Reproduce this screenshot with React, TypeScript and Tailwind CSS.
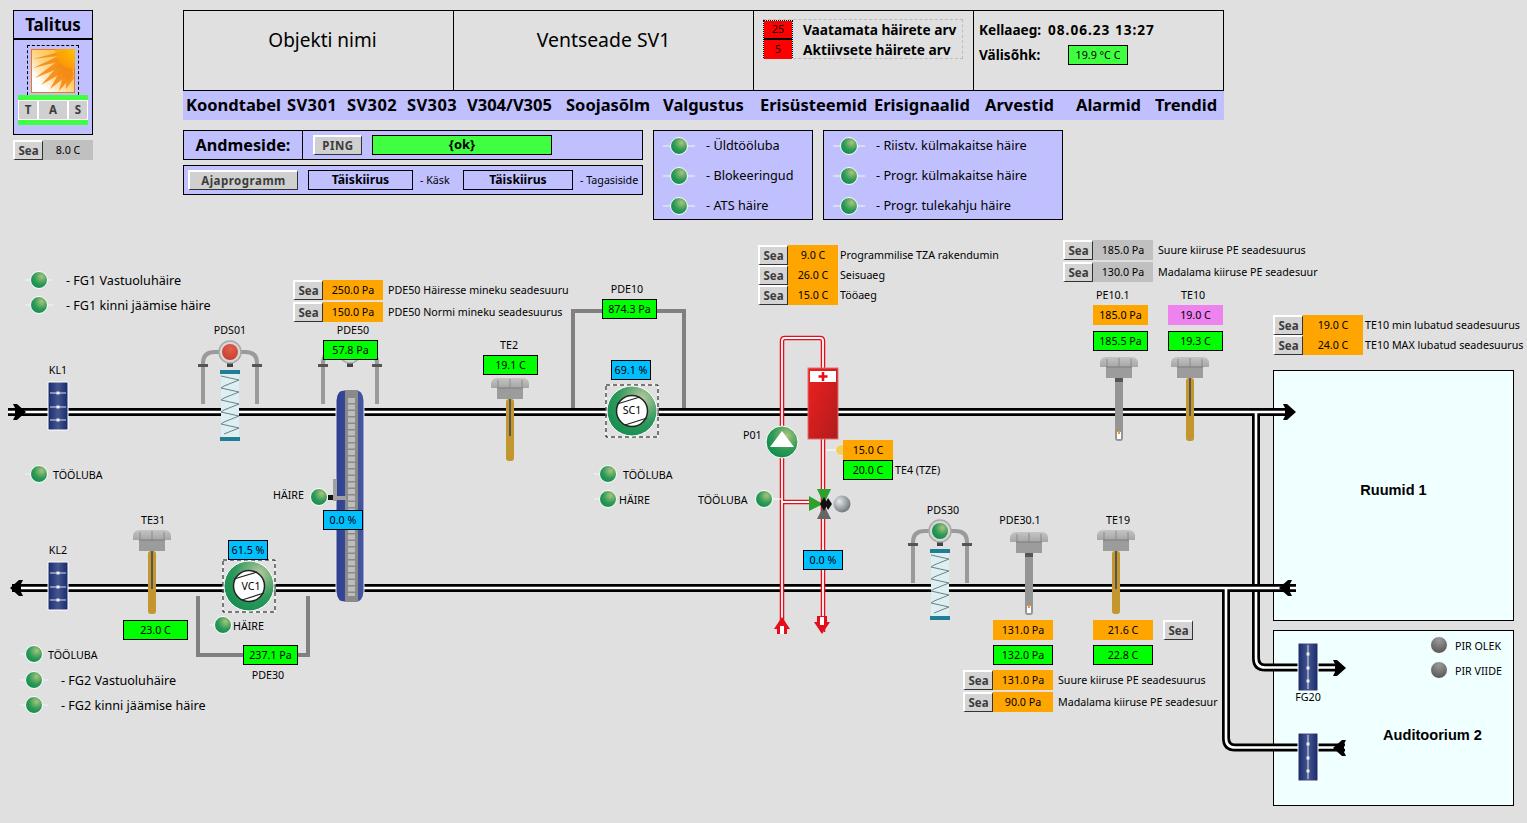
import type { ReactNode } from "react"

const font = "[font-family:'Noto_Sans',Tahoma,sans-serif]"

const navItems = [
  ["Koondtabel", "w-[101px]"],
  ["SV301", "w-[60px] tracking-[0.4px]"],
  ["SV302", "w-[60px] tracking-[0.4px]"],
  ["SV303", "w-[60px] tracking-[0.4px]"],
  ["V304/V305", "w-[99px]"],
  ["Soojasõlm", "w-[97px]"],
  ["Valgustus", "w-[97px]"],
  ["Erisüsteemid", "w-[114px]"],
  ["Erisignaalid", "w-[111px]"],
  ["Arvestid", "w-[91px]"],
  ["Alarmid", "w-[79px]"],
  ["Trendid", "w-[66px]"],
]

const tones: Record<string, string> = {
  orange: "bg-[#ffa500]",
  green: "bg-[#00ff00] border border-black",
  blue: "bg-[#00bfff] border border-black",
  gray: "bg-[#c0c0c0]",
  pink: "bg-[#ee82ee]",
}

function Val({ tone, className = "", children }: { tone: string; className?: string; children: ReactNode }) {
  return (
    <div className={`flex h-5 items-center justify-center text-[10.7px] whitespace-nowrap text-black ${tones[tone]} ${className}`}>
      {children}
    </div>
  )
}

function Sea({ className = "" }: { className?: string }) {
  return (
    <div className={`flex h-5 w-[30px] items-center justify-center border-t-2 border-l-2 border-t-white border-l-white border-r border-b border-r-[#333] border-b-[#333] bg-[#d4d4d4] text-[11.5px] font-bold text-[#3c3c3c] ${className}`}>
      Sea
    </div>
  )
}

function SeaRow({ tone, value, label, w = "w-[60px]", gap = "ml-[5px]" }: { tone: string; value: string; label: string; w?: string; gap?: string }) {
  return (
    <div className="flex h-5 items-center">
      <Sea />
      <Val tone={tone} className={w}>{value}</Val>
      <span className={`text-[10.7px] whitespace-nowrap ${gap}`}>{label}</span>
    </div>
  )
}

function Cap({ className = "", children }: { className?: string; children: ReactNode }) {
  return <div className={`flex h-5 items-center text-[10.7px] whitespace-nowrap ${className}`}>{children}</div>
}

function Lab({ className = "", children }: { className?: string; children: ReactNode }) {
  return <Cap className={`absolute ${className}`}>{children}</Cap>
}

function Led({ x, y, tone = "g", left = 14, right = 14 }: { x: number; y: number; tone?: "g" | "k"; left?: number; right?: number }) {
  return (
    <g>
      <line x1={x - left - 2} y1={y} x2={x + right + 2} y2={y} stroke={tone === "k" ? "#f0ffff" : "#f4f4f4"} strokeWidth="1" />
      <circle cx={x} cy={y} r="8.5" fill={tone === "g" ? "url(#ledGreen)" : "url(#ledGray)"} stroke="#fff" strokeWidth="1" />
    </g>
  )
}

function LedRow({ children }: { children: ReactNode }) {
  return (
    <div className="flex h-[30px] items-center text-[12.7px]">
      <svg width="40" height="24" viewBox="0 0 40 24" className="mr-[9px] ml-[3px] shrink-0">
        <Led x={22} y={12} />
      </svg>
      <span>{children}</span>
    </div>
  )
}

// led with its caption, used for the loose lists on the diagram
function Ind({ tone = "g", right = 12, className = "text-[10.7px]", children }: { tone?: "g" | "k"; right?: number; className?: string; children: ReactNode }) {
  return (
    <div className="flex h-6 items-center whitespace-nowrap">
      <svg width="28" height="24" viewBox="0 0 28 24" className="shrink-0">
        <Led x={14} y={12} tone={tone} left={12} right={right} />
      </svg>
      <span className={`pt-[2px] ${className}`}>{children}</span>
    </div>
  )
}

function Damper({ x, y, vertical }: { x: number; y: number; vertical?: boolean }) {
  const rows = [y + 11, y + 25, y + 38]
  return (
    <g>
      <rect x={x} y={y} width="20" height="48" rx="1" fill="url(#damper)" stroke="#fff" strokeWidth="1" />
      {vertical ? (
        <line x1={x + 10} y1={y + 2} x2={x + 10} y2={y + 46} stroke="#d8e0f0" strokeWidth="1" />
      ) : (
        rows.map((r) => <line key={r} x1={x + 2} y1={r} x2={x + 18} y2={r} stroke="#d8e0f0" strokeWidth="1" />)
      )}
      {rows.map((r) => (
        <rect key={r} x={x + 8.5} y={r - 1.5} width="3" height="3" fill="#fff" opacity="0.85" />
      ))}
    </g>
  )
}

function Coil({ cx, y }: { cx: number; y: number }) {
  const pts: string[] = []
  for (let i = 0; i < 5; i++) {
    pts.push(`${cx - 9},${y + 6 + i * 12} ${cx + 9},${y + 10 + i * 12} ${cx - 6},${y + 16 + i * 12}`)
  }
  return (
    <g>
      <rect x={cx - 9} y={y} width="18" height="71" fill="#dcf0f2" />
      <polyline points={pts.join(" ")} fill="none" stroke="#6f7f86" strokeWidth="1" />
      <rect x={cx - 10} y={y} width="20" height="4" fill="#1f7d96" />
      <rect x={cx - 10} y={y + 67} width="20" height="4" fill="#1f7d96" />
    </g>
  )
}

function Pds({ cx, cy, fill, coil = true }: { cx: number; cy: number; fill: string; coil?: boolean }) {
  return (
    <g>
      <path d={`M${cx - 27} ${cy + 52} V${cy + 11} Q${cx - 27} ${cy} ${cx - 15} ${cy} H${cx - 8}`} fill="none" stroke="#9a9a9a" strokeWidth="4" />
      <path d={`M${cx + 27} ${cy + 52} V${cy + 11} Q${cx + 27} ${cy} ${cx + 15} ${cy} H${cx + 8}`} fill="none" stroke="#9a9a9a" strokeWidth="4" />
      <rect x={cx - 32} y={cy + 12} width="10" height="3" fill="#555" />
      <rect x={cx + 22} y={cy + 12} width="10" height="3" fill="#555" />
      <rect x={cx - 3} y={cy + 11} width="6" height="4" fill="#444" />
      <circle cx={cx} cy={cy} r="11" fill="#d8d8d8" stroke="#a8a8a8" strokeWidth="1.5" />
      <circle cx={cx} cy={cy} r="8" fill={fill} />
      {coil && <Coil cx={cx} y={cy + 18} />}
    </g>
  )
}

function Sensor({ cx, top, bottom, pressure }: { cx: number; top: number; bottom: number; pressure?: boolean }) {
  return (
    <g>
      <rect x={cx - 4} y={top + 22} width="8" height={bottom - top - 22} rx="3" fill={pressure ? "#959595" : "#c4962e"} />
      {pressure ? (
        <>
          <rect x={cx - 4} y={top + 22} width="8" height="4" fill="#555" />
          <rect x={cx - 2} y={bottom - 9} width="4" height="7" fill="#fff" />
          <rect x={cx - 1} y={bottom - 10} width="2" height="3" fill="#f59a23" />
        </>
      ) : (
        <rect x={cx - 1} y={top + 22} width="2" height={bottom - top - 47} fill="#555" />
      )}
      <rect x={cx - 13} y={top + 11} width="26" height="11" fill="#9c9c9c" />
      <path d={`M${cx - 19} ${top + 11} V${top + 6} Q${cx - 18} ${top + 1} ${cx - 12} ${top + 1} H${cx + 12} Q${cx + 18} ${top + 1} ${cx + 19} ${top + 6} V${top + 11} Z`} fill="url(#knob)" />
      <path d={`M${cx - 12} ${top + 3} V${top + 11} M${cx} ${top + 2} V${top + 11} M${cx + 12} ${top + 3} V${top + 11}`} stroke="#8a8a8a" strokeWidth="1" />
      <path d={`M${cx - 13} ${top + 11} H${cx + 13}`} stroke="#7c7c7c" strokeWidth="1" />
    </g>
  )
}

function Fan({ cx, cy }: { cx: number; cy: number }) {
  return (
    <g>
      <rect x={cx - 26} y={cy - 26} width="52" height="52" fill="none" stroke="#fff" strokeWidth="1" />
      <rect x={cx - 26} y={cy - 26} width="52" height="52" fill="none" stroke="#000" strokeWidth="1" strokeDasharray="4 3" />
      <circle cx={cx} cy={cy} r="25" fill="url(#fan)" stroke="#fff" strokeWidth="1" />
      <circle cx={cx} cy={cy} r="15.5" fill="#fff" stroke="#222" strokeWidth="1.5" />
      <line x1={cx - 15} y1={cy - 7} x2={cx + 8} y2={cy - 14} stroke="#222" strokeWidth="1.2" />
      <line x1={cx - 7} y1={cy + 14} x2={cx + 15} y2={cy + 7} stroke="#222" strokeWidth="1.2" />
    </g>
  )
}

function Arrow({ tip, y, dir }: { tip: number; y: number; dir: 1 | -1 }) {
  const p = (dx: number, dy: number) => `${tip - dir * dx},${y + dy}`
  return <polygon points={[p(0, 0), p(9, -8), p(13, -8), p(11, -4), p(11, 4), p(13, 8), p(9, 8)].join(" ")} fill="#000" />
}

function Pipes({ d, stroke, width }: { d: string; stroke: string; width: number }) {
  return <path d={d} fill="none" stroke={stroke} strokeWidth={width} strokeLinejoin="round" />
}

function SunIcon() {
  const rays = [
    [2, 10, 5], [2, 19, 5], [4, 29, 5], [10, 36, 5], [19, 40, 5], [28, 42, 5], [35, 40, 5],
  ]
  return (
    <svg width="44" height="44" viewBox="0 0 44 44">
      <rect x="0.5" y="0.5" width="43" height="43" fill="#fff" stroke="#f07a10" strokeWidth="1.5" />
      <rect x="1" y="1" width="42" height="42" fill="url(#sunBg)" />
      {rays.map(([x, y, w], i) => (
        <polygon key={i} points={`${x},${y} 43,${i * 4 + w} 36,${i * 2 + 1}`} fill="#f58a14" opacity="0.9" />
      ))}
      <circle cx="43" cy="1" r="19" fill="url(#sunCore)" />
    </svg>
  )
}

function Defs() {
  return (
    <svg width="0" height="0" className="absolute">
      <defs>
        <radialGradient id="ledGreen" cx="0.65" cy="0.3" r="0.8">
          <stop offset="0" stopColor="#a8c47c" />
          <stop offset="0.55" stopColor="#2f9a58" />
          <stop offset="1" stopColor="#078a4a" />
        </radialGradient>
        <radialGradient id="ledGray" cx="0.5" cy="0.2" r="0.8">
          <stop offset="0" stopColor="#9a9a9a" />
          <stop offset="1" stopColor="#555" />
        </radialGradient>
        <radialGradient id="ledRed" cx="0.55" cy="0.3" r="0.8">
          <stop offset="0" stopColor="#e0604c" />
          <stop offset="1" stopColor="#c8382c" />
        </radialGradient>
        <radialGradient id="ball" cx="0.35" cy="0.35" r="0.8">
          <stop offset="0" stopColor="#e4e8ea" />
          <stop offset="1" stopColor="#5e6468" />
        </radialGradient>
        <radialGradient id="fan" cx="0.7" cy="0.25" r="0.95">
          <stop offset="0" stopColor="#b8c8a0" />
          <stop offset="0.5" stopColor="#2f9a5c" />
          <stop offset="1" stopColor="#0c8a4c" />
        </radialGradient>
        <linearGradient id="damper" x1="0" x2="1" y1="0" y2="0">
          <stop offset="0" stopColor="#16296a" />
          <stop offset="0.5" stopColor="#47568f" />
          <stop offset="1" stopColor="#16296a" />
        </linearGradient>
        <linearGradient id="knob" x1="0" x2="0" y1="0" y2="1">
          <stop offset="0" stopColor="#c4c4c4" />
          <stop offset="1" stopColor="#a6a6a6" />
        </linearGradient>
        <linearGradient id="heater" x1="0" x2="1" y1="0" y2="1">
          <stop offset="0" stopColor="#f02020" />
          <stop offset="1" stopColor="#b01c1c" />
        </linearGradient>
        <linearGradient id="wheel" x1="0" x2="1" y1="0" y2="0">
          <stop offset="0" stopColor="#2f4090" />
          <stop offset="1" stopColor="#46569f" />
        </linearGradient>
        <linearGradient id="sunBg" x1="1" x2="0" y1="0" y2="1">
          <stop offset="0" stopColor="#ffb000" />
          <stop offset="0.55" stopColor="#ffd890" />
          <stop offset="0.8" stopColor="#fff" />
        </linearGradient>
        <radialGradient id="sunCore">
          <stop offset="0" stopColor="#ffc000" />
          <stop offset="1" stopColor="#ffa000" stopOpacity="0.7" />
        </radialGradient>
      </defs>
    </svg>
  )
}

function Header() {
  return (
    <div className="flex h-[230px] pt-[10px] pl-[13px]">
      <div className="w-20">
        <div className="h-[125px] border border-black bg-[#c0c0ff]">
          <div className="flex h-[29px] items-center justify-center border-b-2 border-black text-[17px] font-bold">Talitus</div>
          <div className="flex flex-col items-center pt-[5px]">
            <div className="flex h-[50px] w-[52px] items-center justify-center border border-b-0 border-dashed border-black">
              <SunIcon />
            </div>
            <div className="h-[5px] w-[70px] bg-[#40ff40]" />
            <div className="flex h-5 w-[70px] items-center justify-between bg-white px-px">
              <div className="flex h-[18px] w-[18px] items-center justify-center bg-[#d0d0d0] text-[11.5px] font-bold text-[#3c3c3c]">T</div>
              <div className="flex h-[18px] w-[28px] items-center justify-center bg-[#d0d0d0] text-[11.5px] font-bold text-[#3c3c3c]">A</div>
              <div className="flex h-[18px] w-[18px] items-center justify-center bg-[#d0d0d0] text-[11.5px] font-bold text-[#3c3c3c]">S</div>
            </div>
            <div className="h-[5px] w-[70px] bg-[#40ff40]" />
          </div>
        </div>
        <div className="mt-[5px] flex">
          <Sea />
          <Val tone="gray" className="w-[50px]">8.0 C</Val>
        </div>
      </div>

      <div className="ml-[90px] w-[1041px]">
        <div className="flex h-[81px] border border-black">
          <div className="flex h-[58px] w-[269px] items-center justify-center pl-2 text-[19px]">Objekti nimi</div>
          <div className="flex h-full w-[300px] justify-center border-l border-black pt-[14px] text-[19.4px]">Ventseade SV1</div>
          <div className="h-full w-[220px] border-l border-black pt-2 pl-[9px]">
            <div className="flex h-10 w-[200px] border border-l-0 border-dashed border-[#bdbdbd]">
              <div className="w-[30px] border border-dotted border-black">
                <div className="flex h-[19px] items-center justify-center border-b-2 border-black bg-[#ff0000] text-[11px]">25</div>
                <div className="flex h-[19px] items-center justify-center bg-[#ff0000] text-[11px]">5</div>
              </div>
              <div className="ml-[10px] text-[13.7px] leading-5 font-bold">
                <div>Vaatamata häirete arv</div>
                <div>Aktiivsete häirete arv</div>
              </div>
            </div>
          </div>
          <div className="h-full flex-1 border-l border-black pt-2 pl-[5px] text-[13.6px] font-bold">
            <div className="flex h-[22px] items-center">
              <span>Kellaaeg:</span>
              <span className="ml-[7px] tracking-[1px]">08.06.23 13:27</span>
            </div>
            <div className="mt-[4px] flex h-5 items-center">
              <span className="w-[89px]">Välisõhk:</span>
              <div className="flex h-5 w-[60px] items-center justify-center border border-black bg-[#40ff40] text-[10.7px] font-normal">19.9 °C C</div>
            </div>
          </div>
        </div>
        <div className="flex h-[29px] items-center bg-[#c0c0ff] pl-[3px] text-[16.5px] font-bold">
          {navItems.map(([name, w]) => (
            <div key={name} className={`shrink-0 whitespace-nowrap ${w}`}>{name}</div>
          ))}
        </div>
        <div className="mt-[10px] flex">
          <div className="w-[460px]">
            <div className="flex h-[30px] items-center border border-black bg-[#c0c0ff]">
              <div className="flex h-full w-[119px] items-center justify-center border-r border-black text-[16.2px] font-bold">Andmeside:</div>
              <div className="ml-[10px] flex h-5 w-[49px] items-center justify-center border-t-2 border-l-2 border-t-white border-l-white border-r border-b border-r-[#333] border-b-[#333] bg-[#d0d0d0] text-[11.5px] font-bold tracking-[0.5px] text-[#3c3c3c]">PING</div>
              <div className="ml-[10px] flex h-5 w-[180px] items-center justify-center border border-black bg-[#40ff40] text-[13px] font-bold">{"{ok}"}</div>
            </div>
            <div className="mt-[5px] flex h-[30px] items-center border border-black bg-[#c0c0ff] text-[10.7px]">
              <div className="ml-[4px] flex h-5 w-[110px] items-center justify-center border-t-2 border-l-2 border-t-white border-l-white border-r border-b border-r-[#333] border-b-[#333] bg-[#d0d0d0] text-[11.5px] font-bold tracking-[0.5px] text-[#3c3c3c]">Ajaprogramm</div>
              <div className="ml-[10px] flex h-5 w-[105px] items-center justify-center border border-black text-[12.2px] font-bold">Täiskiirus</div>
              <span className="ml-[7px] w-[43px]">- Käsk</span>
              <div className="flex h-5 w-[110px] items-center justify-center border border-black text-[12.2px] font-bold">Täiskiirus</div>
              <span className="ml-[7px]">- Tagasiside</span>
            </div>
          </div>
          <div className="ml-[10px] h-[90px] w-40 border border-black bg-[#c0c0ff]">
            <LedRow>- Üldtööluba</LedRow>
            <LedRow>- Blokeeringud</LedRow>
            <LedRow>- ATS häire</LedRow>
          </div>
          <div className="ml-[10px] h-[90px] w-60 border border-black bg-[#c0c0ff]">
            <LedRow>- Riistv. külmakaitse häire</LedRow>
            <LedRow>- Progr. külmakaitse häire</LedRow>
            <LedRow>- Progr. tulekahju häire</LedRow>
          </div>
        </div>
      </div>
    </div>
  )
}

function Drawing() {
  return (
    <svg viewBox="0 230 1527 593" width="1527" height="593" className="absolute top-0 left-0">
      <Pipes d="M8 412 H1290 M1256 412 V658 Q1256 667.5 1265 667.5 H1340" stroke="#000" width={8} />
      <Pipes d="M8 412 H1290 M1256 412 V658 Q1256 667.5 1265 667.5 H1340" stroke="#fff" width={2.6} />
      <Pipes d="M12 588 H1296 M1226 588 V738 Q1226 747.5 1235 747.5 H1345" stroke="#000" width={8} />
      <Pipes d="M12 588 H1296 M1226 588 V738 Q1226 747.5 1235 747.5 H1345" stroke="#fff" width={2.6} />
      <Arrow tip={26} y={412} dir={1} />
      <Arrow tip={1296} y={412} dir={1} />
      <Arrow tip={10} y={588} dir={-1} />
      <Arrow tip={1279} y={588} dir={-1} />
      <Arrow tip={1346} y={668} dir={1} />
      <Arrow tip={1333} y={748} dir={-1} />

      <path d="M573 408 V311 H684 V408" fill="none" stroke="#808080" strokeWidth="4" />
      <path d="M198 596 V655 H308 V596" fill="none" stroke="#808080" strokeWidth="4" />

      <Damper x={48} y={382} />
      <Damper x={48} y={562} />
      <Damper x={1298} y={643} vertical />
      <Damper x={1298} y={733} vertical />

      <Pds cx={230} cy={352} fill="url(#ledRed)" />
      <Pds cx={350} cy={352} fill="url(#ledGray)" coil={false} />
      <Pds cx={940} cy={531} fill="url(#ledGreen)" />

      <path d="M336 400 Q337 390 344 390 H356 Q363 390 364 400 V592 Q363 602 356 602 H344 Q337 602 336 592 Z" fill="url(#wheel)" stroke="#e8e8e8" strokeWidth="1" />
      <rect x="345" y="390" width="13" height="212" fill="#8a8a8a" />
      <line x1="351.5" y1="398" x2="351.5" y2="596" stroke="#bdbdbd" strokeWidth="7" strokeDasharray="5 1.5" />
      <rect x="333" y="479" width="4" height="22" fill="#a0a0a0" />
      <rect x="333" y="496" width="13" height="4" fill="#a0a0a0" />
      <rect x="328" y="495" width="5" height="5" fill="#111" />

      <Sensor cx={510} top={377} bottom={461} />
      <Sensor cx={152} top={529} bottom={614} />
      <Sensor cx={1119} top={356} bottom={441} pressure />
      <Sensor cx={1190} top={356} bottom={441} />
      <Sensor cx={1029} top={531} bottom={615} pressure />
      <Sensor cx={1116} top={529} bottom={614} />

      <Fan cx={632} cy={411} />
      <Fan cx={249} cy={586} />

      <path d="M782 630 V341 Q782 338 785 338 H820 Q823 338 823 341 V632 M782 502 H812" fill="none" stroke="#e60d1a" strokeWidth="4.5" strokeLinejoin="round" />
      <path d="M782 630 V341 Q782 338 785 338 H820 Q823 338 823 341 V632 M782 502 H812" fill="none" stroke="#fff" strokeWidth="1.8" strokeLinejoin="round" />
      <polygon points="782,617 790,629 787,629 787,634 777,634 777,629 774,629" fill="#e60d1a" />
      <polygon points="822,634 830,622 827,622 827,616 817,616 817,622 814,622" fill="#e60d1a" />
      <rect x="820" y="617" width="4" height="8" fill="#fff" />
      <rect x="780" y="626" width="4" height="8" fill="#fff" />

      <rect x="808" y="368" width="30" height="71" fill="url(#heater)" stroke="#e07070" strokeWidth="1" />
      <rect x="810" y="371" width="26" height="11" fill="#fff" />
      <path d="M823 372 V381 M818.5 376.5 H827.5" stroke="#e60d1a" strokeWidth="2.5" />

      <line x1="826" y1="450" x2="838" y2="450" stroke="#fff" strokeWidth="1" />
      <circle cx="841" cy="450" r="5.5" fill="#f0d060" stroke="#fff" strokeWidth="0.5" />

      <circle cx="782" cy="442" r="16" fill="url(#ledGreen)" stroke="#fff" strokeWidth="1" />
      <polygon points="782,431 794,447 770,447" fill="#fff" />

      <line x1="772" y1="499" x2="782" y2="499" stroke="#fff" strokeWidth="1" />
      <Led x={764} y={499} left={0} right={6} />

      <polygon points="817,489 831,489 824,504" fill="#2ea02e" />
      <polygon points="809,496 809,511 823,504" fill="#2ea02e" />
      <polygon points="817,519 831,519 824,505" fill="#666" />
      <polygon points="824,497 828,504 824,511 820,504" fill="#111" />
      <polygon points="828,498 832,504 828,510 825,504" fill="#111" />
      <circle cx="842" cy="504" r="8.5" fill="url(#ball)" />

      <Led x={319} y={497} left={0} right={0} />
    </svg>
  )
}

function Diagram() {
  return (
    <div className="relative h-[593px]">
      <div className="absolute top-[140px] left-[1273px] flex h-[251px] w-[241px] items-center justify-center border border-black bg-[#f0ffff] font-['Liberation_Sans',Arial,sans-serif] text-[14.6px] font-bold">
        <span className="mb-[10px]">Ruumid 1</span>
      </div>
      <div className="absolute top-[400px] left-[1273px] flex h-[176px] w-[241px] justify-center border border-black bg-[#f0ffff] pt-[94px] pl-[78px] font-['Liberation_Sans',Arial,sans-serif] text-[14.6px] font-bold">
        Auditoorium 2
      </div>

      <Drawing />

      <div className="absolute top-[50px] left-[293px] flex flex-col gap-[2px]">
        <SeaRow tone="orange" value="250.0 Pa" label="PDE50 Häiresse mineku seadesuuru" />
        <SeaRow tone="orange" value="150.0 Pa" label="PDE50 Normi mineku seadesuurus" />
      </div>
      <div className="absolute top-[15px] left-[758px] flex flex-col">
        <SeaRow tone="orange" value="9.0 C" label="Programmilise TZA rakendumin" w="w-[50px]" gap="ml-[2px]" />
        <SeaRow tone="orange" value="26.0 C" label="Seisuaeg" w="w-[50px]" gap="ml-[2px]" />
        <SeaRow tone="orange" value="15.0 C" label="Tööaeg" w="w-[50px]" gap="ml-[2px]" />
      </div>
      <div className="absolute top-[10px] left-[1063px] flex flex-col gap-[2px]">
        <SeaRow tone="gray" value="185.0 Pa" label="Suure kiiruse PE seadesuurus" />
        <SeaRow tone="gray" value="130.0 Pa" label="Madalama kiiruse PE seadesuur" />
      </div>
      <div className="absolute top-[85px] left-[1273px] flex flex-col">
        <SeaRow tone="orange" value="19.0 C" label="TE10 min lubatud seadesuurus" gap="ml-[2px]" />
        <SeaRow tone="orange" value="24.0 C" label="TE10 MAX lubatud seadesuurus" gap="ml-[2px]" />
      </div>
      <div className="absolute top-[440px] left-[963px] flex flex-col gap-[2px]">
        <SeaRow tone="orange" value="131.0 Pa" label="Suure kiiruse PE seadesuurus" />
        <SeaRow tone="orange" value="90.0 Pa" label="Madalama kiiruse PE seadesuur" />
      </div>

      <div className="absolute top-[90px] left-[323px] flex w-[55px] flex-col items-center">
        <Cap className="pl-[5px]">PDE50</Cap>
        <Val tone="green" className="w-full">57.8 Pa</Val>
      </div>
      <div className="absolute top-[105px] left-[483px] flex w-[55px] flex-col items-center">
        <Cap className="pr-[3px]">TE2</Cap>
        <Val tone="green" className="w-full">19.1 C</Val>
      </div>
      <div className="absolute top-[49px] left-[602px] flex w-[55px] flex-col items-center">
        <Cap className="pr-[5px]">PDE10</Cap>
        <Val tone="green" className="w-full">874.3 Pa</Val>
      </div>
      <div className="absolute top-[55px] left-[1093px] flex w-[130px] gap-5">
        <div className="flex w-[55px] flex-col gap-[6px]">
          <Cap className="-mb-[6px] pl-[3px]">PE10.1</Cap>
          <Val tone="orange">185.0 Pa</Val>
          <Val tone="green">185.5 Pa</Val>
        </div>
        <div className="flex w-[55px] flex-col gap-[6px]">
          <Cap className="-mb-[6px] pl-[13px]">TE10</Cap>
          <Val tone="pink">19.0 C</Val>
          <Val tone="green">19.3 C</Val>
        </div>
      </div>
      <div className="absolute top-[210px] left-[843px] flex items-end gap-[2px]">
        <div className="flex w-[50px] flex-col">
          <Val tone="orange">15.0 C</Val>
          <Val tone="green">20.0 C</Val>
        </div>
        <Cap>TE4 (TZE)</Cap>
      </div>
      <div className="absolute top-[415px] left-[243px] flex w-[55px] flex-col items-center">
        <Val tone="green" className="w-full">237.1 Pa</Val>
        <Cap className="pr-[5px]">PDE30</Cap>
      </div>
      <div className="absolute top-[390px] left-[993px] flex items-start gap-10">
        <div className="flex w-[60px] flex-col gap-[5px]">
          <Val tone="orange">131.0 Pa</Val>
          <Val tone="green">132.0 Pa</Val>
        </div>
        <div className="flex w-[60px] flex-col gap-[5px]">
          <Val tone="orange">21.6 C</Val>
          <Val tone="green">22.8 C</Val>
        </div>
        <Sea className="-ml-[30px]" />
      </div>

      <Val tone="blue" className="absolute top-[280px] left-[323px] w-10">0.0 %</Val>
      <Val tone="blue" className="absolute top-[130px] left-[611px] w-10">69.1 %</Val>
      <Val tone="blue" className="absolute top-[320px] left-[803px] w-10">0.0 %</Val>
      <Val tone="blue" className="absolute top-[310px] left-[228px] w-10">61.5 %</Val>
      <Val tone="green" className="absolute top-[390px] left-[123px] w-[65px]">23.0 C</Val>

      <Lab className="top-[130px] left-[58px] -translate-x-1/2">KL1</Lab>
      <Lab className="top-[310px] left-[58px] -translate-x-1/2">KL2</Lab>
      <Lab className="top-[90px] left-[230px] -translate-x-1/2">PDS01</Lab>
      <Lab className="top-[280px] left-[153px] -translate-x-1/2">TE31</Lab>
      <Lab className="top-[270px] left-[943px] -translate-x-1/2">PDS30</Lab>
      <Lab className="top-[280px] left-[1020px] -translate-x-1/2">PDE30.1</Lab>
      <Lab className="top-[280px] left-[1118px] -translate-x-1/2">TE19</Lab>
      <Lab className="top-[170px] left-[632px] -translate-x-1/2">SC1</Lab>
      <Lab className="top-[346px] left-[251px] -translate-x-1/2">VC1</Lab>
      <Lab className="top-[195px] left-[743px]">P01</Lab>
      <Lab className="top-[457px] left-[1308px] -translate-x-1/2">FG20</Lab>
      <Lab className="top-[260px] left-[698px]">TÖÖLUBA</Lab>
      <Lab className="top-[255px] left-[273px]">HÄIRE</Lab>

      <div className="absolute top-[38px] left-[25px] flex flex-col gap-px">
        <Ind className="ml-[13px] text-[12.6px]">- FG1 Vastuoluhäire</Ind>
        <Ind className="ml-[13px] text-[12.6px]">- FG1 kinni jäämise häire</Ind>
      </div>
      <div className="absolute top-[232px] left-[25px]">
        <Ind right={5}>TÖÖLUBA</Ind>
      </div>
      <div className="absolute top-[232px] left-[594px] flex flex-col gap-px">
        <Ind right={5} className="ml-px text-[10.7px]">TÖÖLUBA</Ind>
        <Ind right={0} className="-ml-[3px] text-[10.7px]">HÄIRE</Ind>
      </div>
      <div className="absolute top-[383px] left-[209px]">
        <Ind right={0} className="-ml-[4px] text-[10.7px]">HÄIRE</Ind>
      </div>
      <div className="absolute top-[412px] left-[20px] flex flex-col gap-px">
        <div className="mb-px">
          <Ind right={5}>TÖÖLUBA</Ind>
        </div>
        <Ind className="ml-[13px] text-[12.6px]">- FG2 Vastuoluhäire</Ind>
        <Ind className="ml-[13px] text-[12.6px]">- FG2 kinni jäämise häire</Ind>
      </div>
      <div className="absolute top-[403px] left-[1425px] flex flex-col gap-px">
        <Ind tone="k" right={0} className="ml-[2px] text-[10.7px]">PIR OLEK</Ind>
        <Ind tone="k" right={0} className="ml-[2px] text-[10.7px]">PIR VIIDE</Ind>
      </div>
    </div>
  )
}

export default function App() {
  return (
    <div className={`relative h-[823px] w-[1527px] overflow-hidden bg-[#e0e0e0] text-black ${font}`}>
      <Defs />
      <Header />
      <Diagram />
    </div>
  )
}
